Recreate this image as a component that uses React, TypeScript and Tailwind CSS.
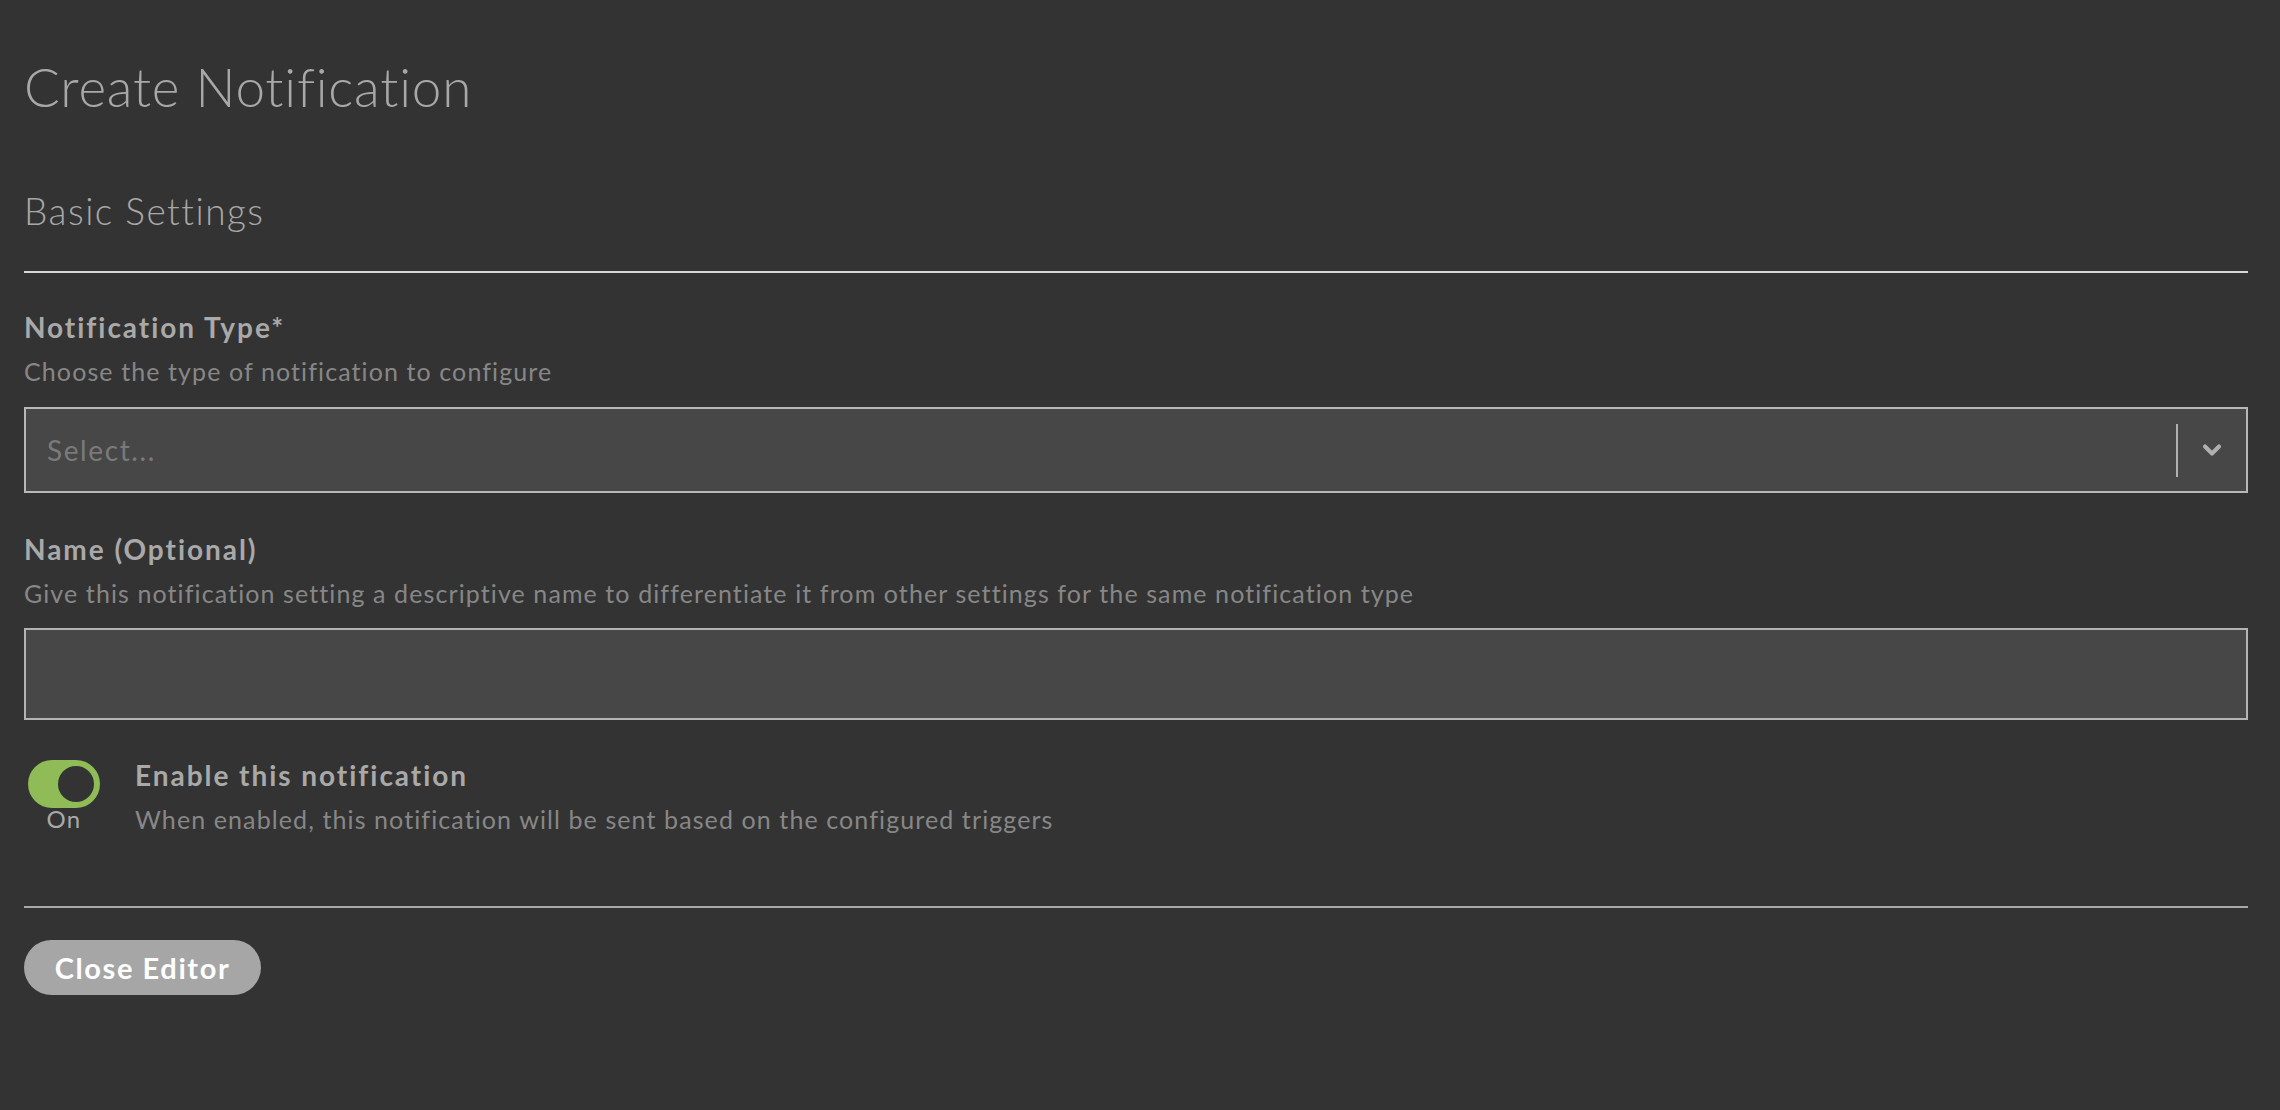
import { ChevronDown } from 'lucide-react';

const font = { fontFamily: 'Lato, "Open Sans", sans-serif' };

function FieldLabel({ title, hint, required }: { title: string; hint: string; required?: boolean }) {
  return (
    <div>
      <div className="text-[28px] leading-[34px] font-bold tracking-[0.07em] text-[#a9a9a9]">
        {title}
        {required && <span>*</span>}
      </div>
      <div className="mt-[12px] text-[25px] leading-[30px] tracking-[0.044em] text-[#878787]">{hint}</div>
    </div>
  );
}

export default function App() {
  return (
    <div className="min-h-[1110px] w-full bg-[#333333] pl-[24px] pr-[32px] pt-[55px]" style={font}>
      <h1 className="text-[53px] leading-[64px] font-light tracking-[0.015em] text-[#a8a8a8]">
        Create Notification
      </h1>

      <h2 className="mt-[70px] text-[37px] leading-[44px] font-light tracking-[0.04em] text-[#a8a8a8]">
        Basic Settings
      </h2>
      <div className="mt-[38px] h-[2px] bg-[#d8d8d8]" />

      <div className="mt-[37px]">
        <FieldLabel
          title="Notification Type"
          hint="Choose the type of notification to configure"
          required
        />
        <div className="mt-[21px] flex h-[86px] items-center border-2 border-[#b8b8b8] bg-[#474747]">
          <span className="flex-1 pl-[21px] text-[28px] tracking-[0.057em] text-[#7a7a7a]">Select...</span>
          <div className="h-[53px] w-[2px] bg-[#b0b0b0]" />
          <div className="flex w-[68px] items-center justify-center text-[#b0b0b0]">
            <ChevronDown size={28} strokeWidth={3.5} />
          </div>
        </div>
      </div>

      <div className="mt-[39px]">
        <FieldLabel
          title="Name (Optional)"
          hint="Give this notification setting a descriptive name to differentiate it from other settings for the same notification type"
        />
        <div className="mt-[20px] h-[92px] border-2 border-[#b4b4b4] bg-[#474747]" />
      </div>

      <div className="mt-[38px] ml-[4px] flex items-start gap-[35px]">
        <div className="flex w-[72px] flex-col items-center pt-[2px]">
          <div className="flex h-[48px] w-[72px] items-center justify-end rounded-full bg-[#8fbc56] pr-[6px]">
            <div className="h-[36px] w-[36px] rounded-full bg-[#333333]" />
          </div>
          <span className="mt-[-2px] text-[24px] leading-[26px] tracking-[0.06em] text-[#a9a9a9]">On</span>
        </div>
        <div className="flex flex-col">
          <span className="text-[28px] leading-[34px] font-bold tracking-[0.07em] text-[#a9a9a9]">
            Enable this notification
          </span>
          <span className="mt-[12px] text-[25px] leading-[30px] tracking-[0.044em] text-[#878787]">
            When enabled, this notification will be sent based on the configured triggers
          </span>
        </div>
      </div>

      <div className="mt-[72px] h-[2px] bg-[#a9a9a9]" />

      <button
        type="button"
        className="mt-[32px] h-[55px] w-[237px] rounded-full bg-[#a6a6a6] text-[29px] font-bold tracking-[0.055em] text-white"
      >
        Close Editor
      </button>
    </div>
  );
}
